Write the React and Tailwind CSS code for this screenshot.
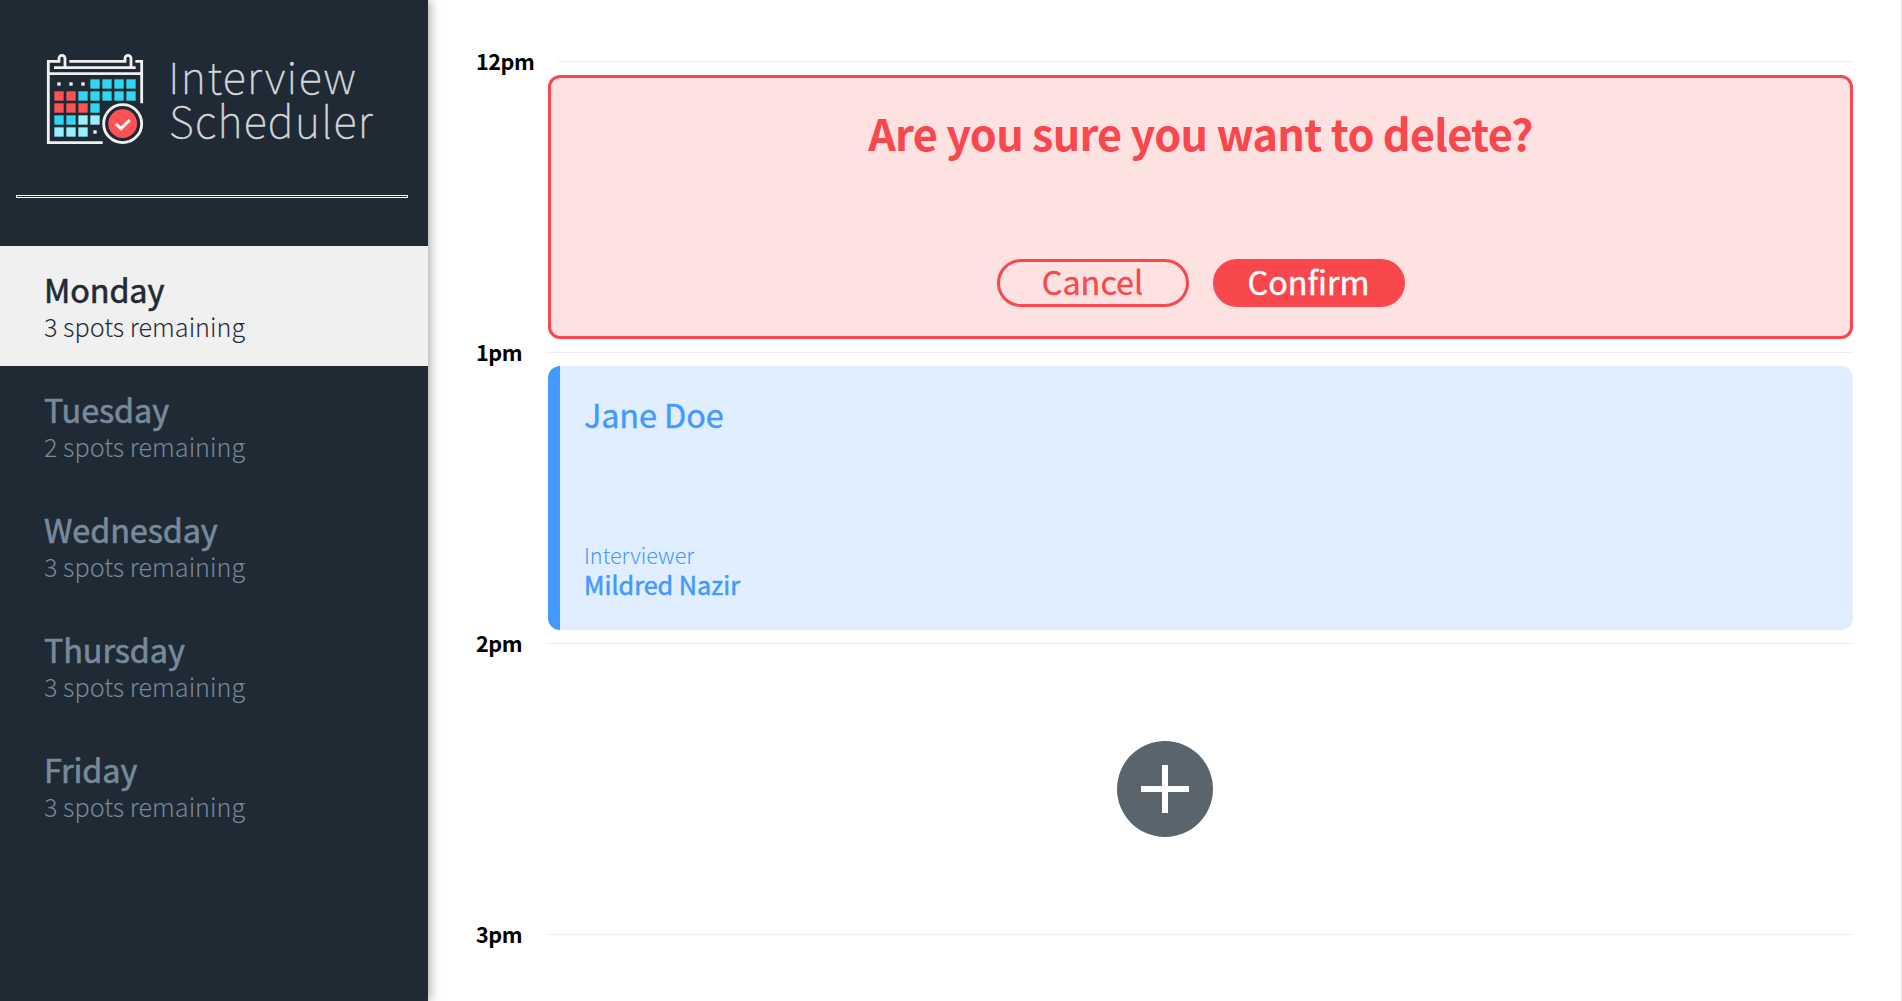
const FONT = "font-['Noto_Sans_CJK_SC','Noto_Sans',sans-serif]";

const days = [
  { name: "Monday", spots: "3 spots remaining", selected: true },
  { name: "Tuesday", spots: "2 spots remaining" },
  { name: "Wednesday", spots: "3 spots remaining" },
  { name: "Thursday", spots: "3 spots remaining" },
  { name: "Friday", spots: "3 spots remaining" },
];

const RED = "#ff5256";
const CYAN = "#2fd8f0";
const PALE = "#98f0fa";

// One string per calendar row; "." is a small dot, a letter picks the fill.
const cells = ["...cccc", "rrccccc", "rrrc", "ccpp", "ppp."];
const fills = { c: CYAN, r: RED, p: PALE };

function Logo() {
  return (
    <svg className="h-[110px] w-[350px]" viewBox="0 0 1050 330" role="img" aria-label="Interview Scheduler">
      <g fill="none" stroke="#f0f0f0" strokeWidth="8.5">
        <path d="M188 293H25V49H57V40A9 9 0 0 1 75 40V67" />
        <path d="M88 49H255V40A9 9 0 0 1 273 40V67" />
        <path d="M286 49H305V175" />
        <path d="M42 68H287" />
        <path d="M25 86H305" />
        <circle cx="248" cy="236" r="57" />
      </g>
      <circle cx="248" cy="236" r="43" fill={RED} />
      <path d="M228 237L243 251L269 225" fill="none" stroke="#fff" strokeWidth="9" />
      {cells.map((row, r) =>
        [...row].map((c, i) =>
          c === "." ? (
            <rect key={`${r}-${i}`} x={52 + i * 36} y={112 + r * 36} width="10" height="10" fill="#f0f0f0" />
          ) : (
            <rect key={`${r}-${i}`} x={43 + i * 36} y={103 + r * 36} width="28" height="28" fill={fills[c]} />
          )
        )
      )}
      <g
        className="font-['Noto_Sans_CJK_SC',sans-serif] font-thin"
        fill="#d5d8db"
        stroke="#d5d8db"
        strokeWidth="1.5"
        fontSize="130"
        lengthAdjust="spacing"
      >
        <text x="385" y="148" textLength="562">Interview</text>
        <text x="387" y="279" textLength="610">Scheduler</text>
      </g>
    </svg>
  );
}

function Day({ name, spots, selected }) {
  return (
    <li
      className={
        selected
          ? "flex h-[120px] flex-col bg-[#f0f0f0] pl-11 pt-[23px] text-[#1f2a35]"
          : "flex h-[120px] flex-col pl-11 pt-[23px] text-[#768a9c]"
      }
    >
      <h2 className="h-[41px] text-[32.4px] leading-10 tracking-[-0.1px] [-webkit-text-stroke:0.6px_currentColor]">{name}</h2>
      <h3 className="h-8 text-[25.2px] font-light leading-8">{spots}</h3>
    </li>
  );
}

function Hour({ time, children }) {
  return (
    <article className="flex h-[291px] shrink-0 flex-col">
      <header className="flex h-6 items-center gap-6">
        <h4 className="text-[21.6px] font-bold leading-6 tracking-[-0.5px] text-black">{time}</h4>
        <hr className="grow border-t border-[#eeeeee]" />
      </header>
      <div className="ml-[72px] mt-[2px] flex h-[264px]">{children}</div>
    </article>
  );
}

export default function App() {
  return (
    <main className={`${FONT} flex h-[1001px] overflow-hidden bg-white`}>
      <section className="z-10 flex w-[428px] shrink-0 flex-col bg-[#1f2a35] shadow-[2px_0_10px_rgba(0,0,0,0.35)]">
        <div className="h-[195px] pl-10 pt-[45px]">
          <Logo />
        </div>
        <hr className="ml-4 mr-5 h-[3px] border border-white" />
        <ul className="mt-12 flex flex-col">
          {days.map((d) => (
            <Day key={d.name} {...d} />
          ))}
        </ul>
      </section>

      <section className="flex grow flex-col border-r border-[#e4e4e4] pl-12 pr-12 pt-[49px]">
        <Hour time="12pm">
          <div className="flex grow flex-col items-center rounded-[12px] border-[3px] border-[#f8484d] bg-[#fee1e1] text-[#f8484d]">
            <h1 className="mt-6 h-[60px] text-[43.2px] font-bold leading-[60px] tracking-[-0.72px]">
              Are you sure you want to delete?
            </h1>
            <div className="mt-[97px] flex gap-6">
              <button className="h-12 w-48 rounded-[24px] border-[3px] border-[#f8484d] pb-1 text-[32.4px] leading-[38px] [-webkit-text-stroke:0.3px_currentColor]">
                Cancel
              </button>
              <button className="h-12 w-48 rounded-[24px] border-[3px] border-[#f8484d] bg-[#f8484d] pb-1 text-[32.4px] leading-[38px] text-white [-webkit-text-stroke:0.4px_currentColor]">
                Confirm
              </button>
            </div>
          </div>
        </Hour>
        <Hour time="1pm">
          <div className="flex grow flex-col justify-between rounded-[12px] border-l-[12px] border-[#4299ff] bg-[#e0eeff] pb-[31px] pl-6 pt-7 text-[#4299ff]">
            <h2 className="text-[32.4px] leading-10 tracking-[-0.1px] [-webkit-text-stroke:0.4px_currentColor]">Jane Doe</h2>
            <div>
              <h4 className="text-[21.6px] font-light leading-[29px]">Interviewer</h4>
              <h3 className="text-[25.2px] leading-[30px] [-webkit-text-stroke:0.5px_currentColor]">Mildred Nazir</h3>
            </div>
          </div>
        </Hour>
        <Hour time="2pm">
          <div className="flex grow items-center justify-center pr-[71px]">
            <button aria-label="Add" className="size-24">
              <svg viewBox="0 0 96 96">
                <circle cx="48" cy="48" r="48" fill="#5a646d" />
                <path d="M48 24V72M24 48H72" stroke="#fff" strokeWidth="6" />
              </svg>
            </button>
          </div>
        </Hour>
        <Hour time="3pm" />
      </section>
    </main>
  );
}
